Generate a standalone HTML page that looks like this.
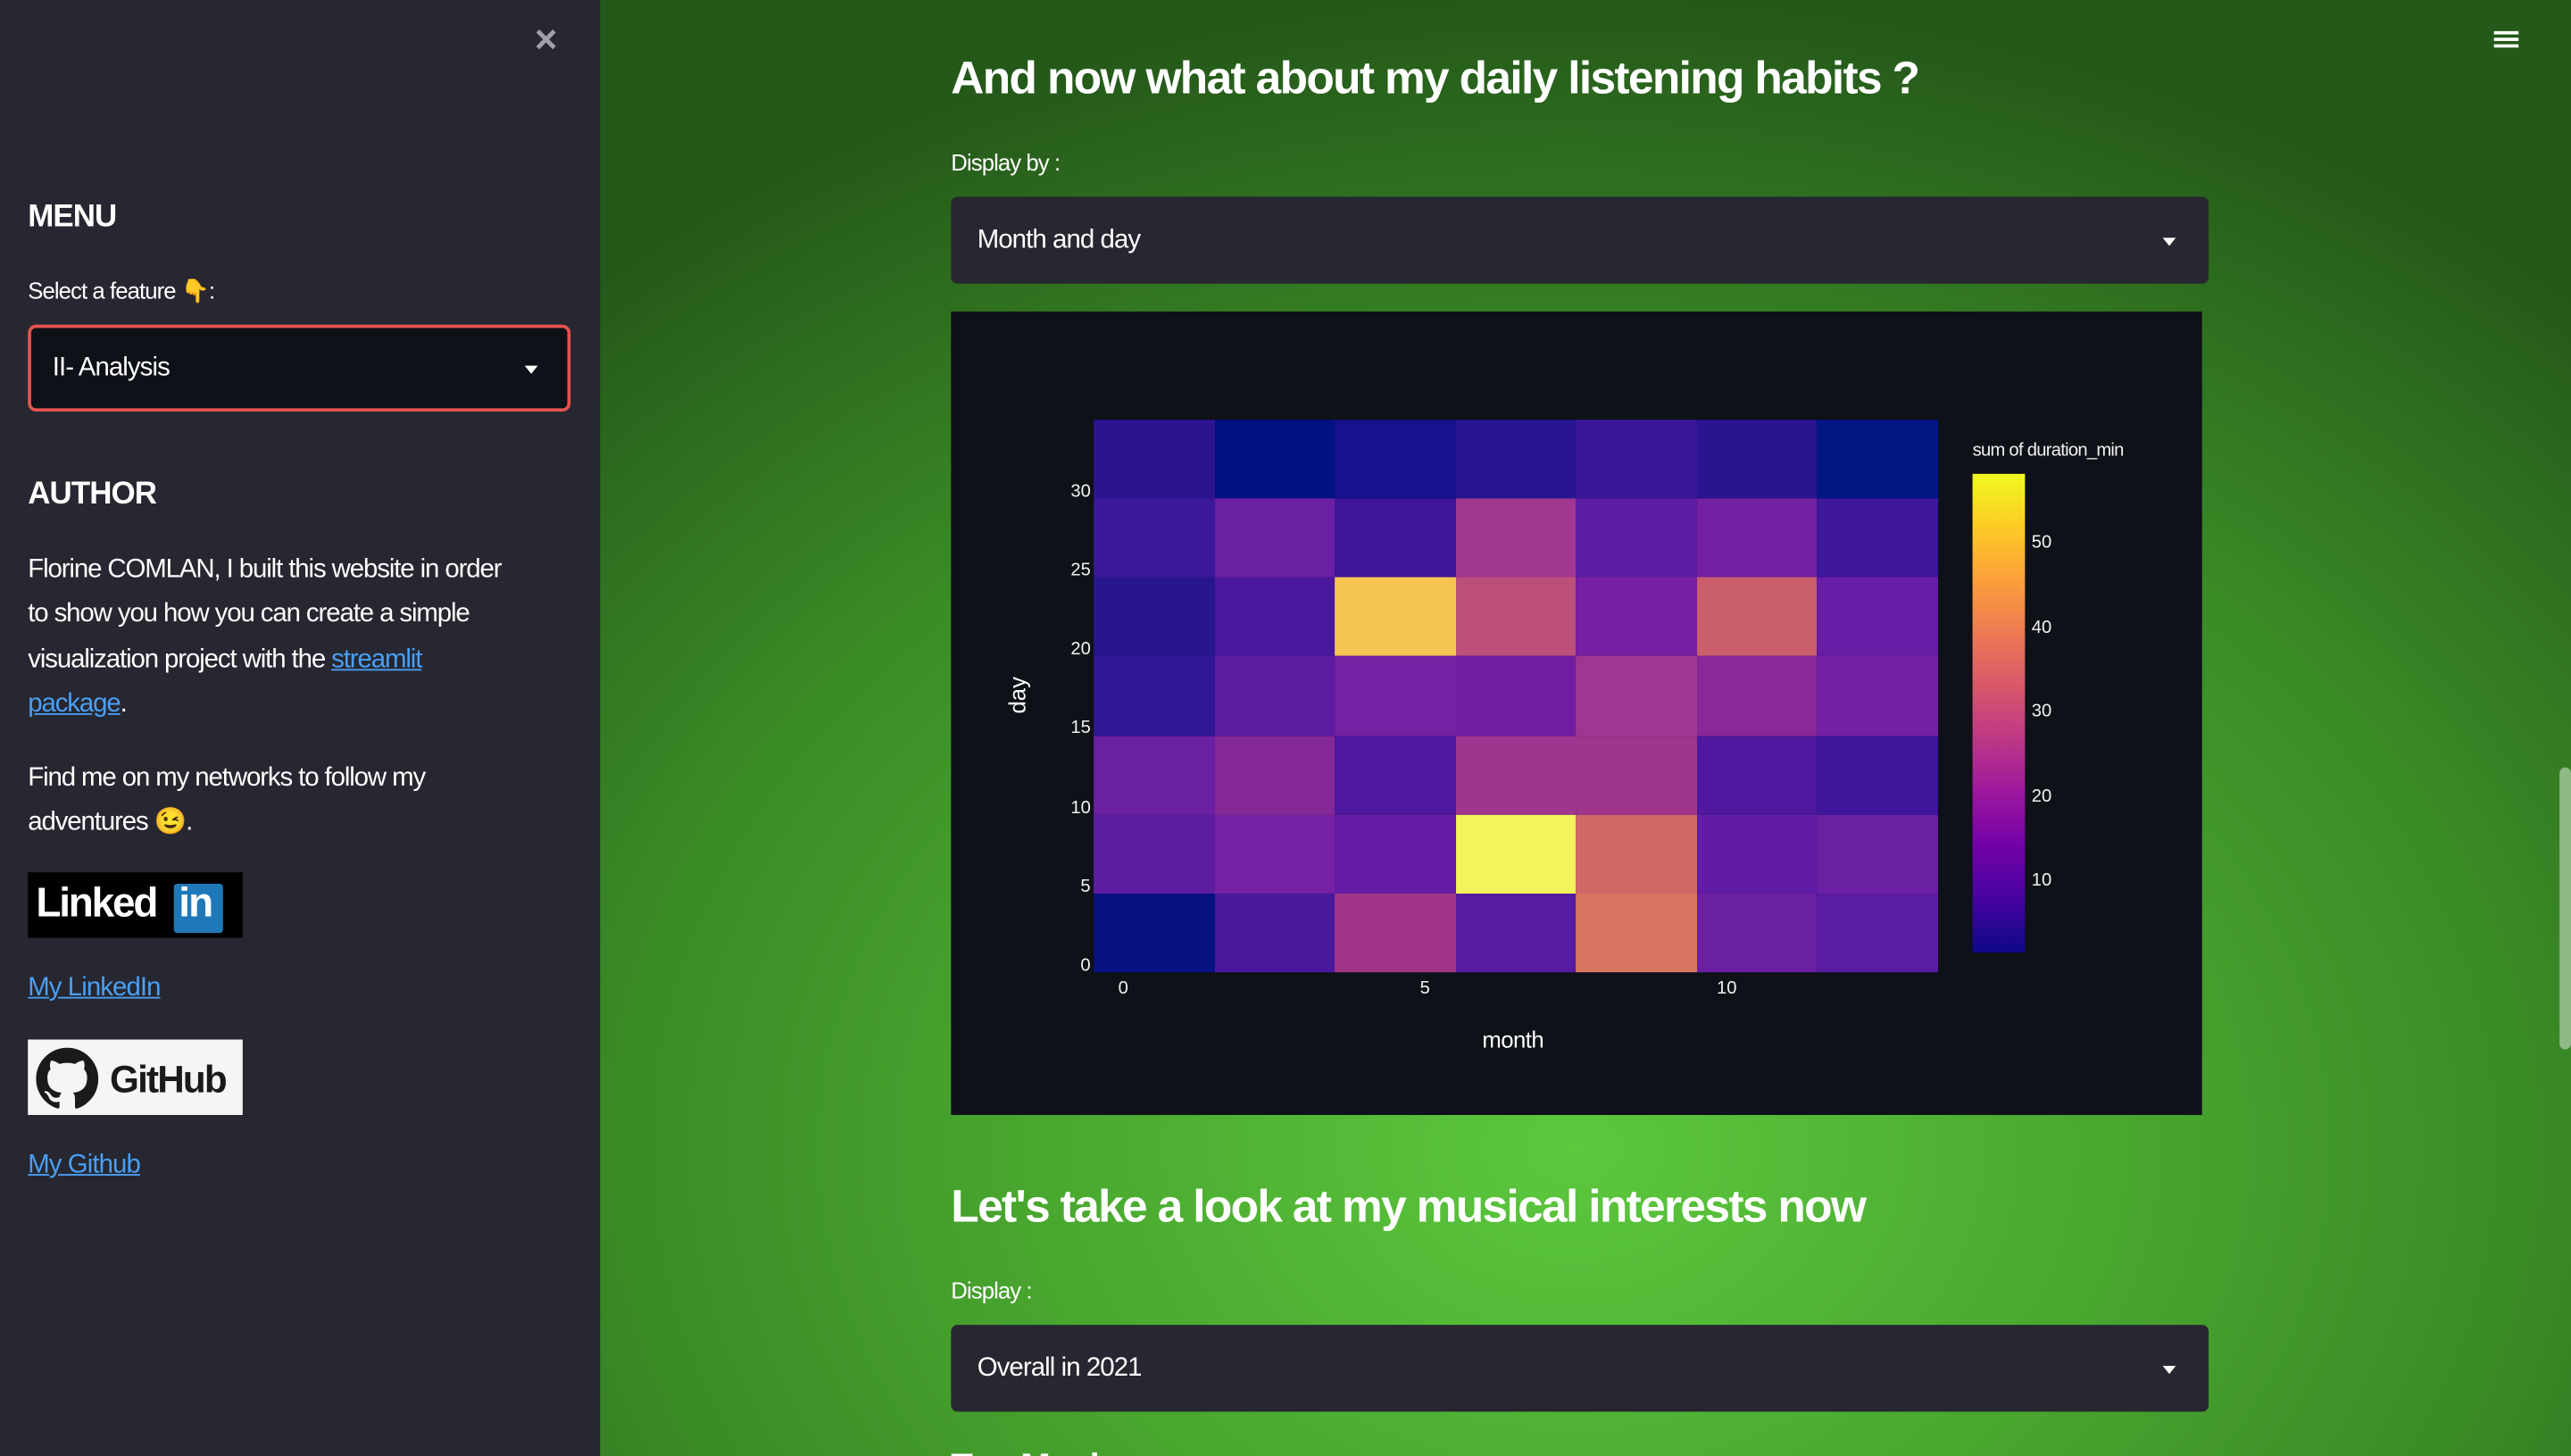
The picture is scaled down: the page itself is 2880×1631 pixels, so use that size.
<!DOCTYPE html>
<html><head><meta charset="utf-8">
<style>
html,body{margin:0;padding:0;width:2880px;height:1630px;overflow:hidden;background:#3a8a26;}
#w{position:absolute;left:0;top:0;width:1568px;height:888px;transform:scale(1.836735);transform-origin:0 0;font-family:"Liberation Sans","Noto Sans CJK JP",sans-serif;color:#fff;overflow:hidden;
background:radial-gradient(ellipse 900px 700px at 960px 700px,#5cc83e 0%,#4aa82f 35%,#3a8a26 65%,#25591a 100%);}
#side{position:absolute;left:0;top:0;width:366px;height:888px;background:#262730;}
.abs{position:absolute;white-space:nowrap}
.sel{position:absolute;border-radius:4px;background:#262730;}
.arr{position:absolute;width:0;height:0;border-left:4.5px solid transparent;border-right:4.5px solid transparent;border-top:5px solid #fff;}
a{color:#4a9ff5;text-decoration:underline}
.cell{position:absolute;width:73.6px;height:48.2px}
.tk{position:absolute;font-size:11px;color:#f2f2f2}
</style></head><body><div id="w">
<div id="side">
 <div class="abs" style="left:326px;top:11px;font-size:24px;color:#a0a0a8;font-weight:bold">×</div>
 <div class="abs" style="left:17px;top:122px;font-size:19px;font-weight:bold;letter-spacing:-0.5px">MENU</div>
 <div class="abs" style="left:17px;top:169px;font-size:14px;letter-spacing:-0.5px">Select a feature <span style="color:#f2b53a">👇</span>:</div>
 <div class="abs" style="left:17px;top:198px;width:327px;height:49px;background:#0e1117;border:2px solid #e5544f;border-radius:5px"></div>
 <div class="abs" style="left:32px;top:216px;font-size:16px;letter-spacing:-0.5px">II- Analysis</div>
 <div class="arr" style="left:320px;top:223px"></div>
 <div class="abs" style="left:17px;top:291px;font-size:19px;font-weight:bold;letter-spacing:-0.5px">AUTHOR</div>
 <div class="abs" style="left:17px;top:334px;font-size:16px;line-height:27.3px;letter-spacing:-0.6px">Florine COMLAN, I built this website in order<br>to show you how you can create a simple<br>visualization project with the <a>streamlit</a><br><a>package</a>.</div>
 <div class="abs" style="left:17px;top:461px;font-size:16px;line-height:27.3px;letter-spacing:-0.6px">Find me on my networks to follow my<br>adventures <span style="color:#f2c43a">😉</span>.</div>
 <div class="abs" style="left:17px;top:532px;width:131px;height:40px;background:#000"></div>
 <div class="abs" style="left:22px;top:537px;font-size:25px;font-weight:bold;letter-spacing:-1.2px">Linked</div>
 <div class="abs" style="left:106px;top:539px;width:30px;height:30px;background:#1f78b8;border-radius:2px"></div>
 <div class="abs" style="left:109px;top:537px;font-size:25px;font-weight:bold;letter-spacing:-1px">in</div>
 <div class="abs" style="left:17px;top:594px;font-size:16px;letter-spacing:-0.5px"><a>My LinkedIn</a></div>
 <div class="abs" style="left:17px;top:634px;width:131px;height:46px;background:#f5f5f5"></div>
 <svg class="abs" style="left:22px;top:639px" width="38" height="38" viewBox="0 0 16 16"><path fill="#1a1a1a" d="M8 0C3.58 0 0 3.58 0 8c0 3.54 2.29 6.530 5.47 7.590.4.07.55-.17.55-.38v-1.34c-2.23.48-2.7-1.07-2.7-1.07-.36-.92-.89-1.17-.89-1.17-.73-.5.06-.49.06-.49.8.06 1.23.83 1.23.83.71 1.22 1.87.87 2.33.66.07-.52.28-.87.51-1.07-1.780-.2-3.65-.89-3.65-3.95 0-.87.31-1.59.82-2.150-.08-.2-.36-1.02.08-2.12 0 0 .67-.21 2.2.82a7.6 7.6 0 0 1 4 0c1.53-1.04 2.2-.82 2.2-.82.44 1.1.16 1.92.08 2.12.51.56.82 1.27.82 2.15 0 3.07-1.87 3.75-3.65 3.95.29.25.54.73.54 1.48v2.2c0 .21.15.46.55.38A8.01 8.01 0 0 0 16 8c0-4.42-3.58-8-8-8z"/></svg>
 <div class="abs" style="left:67px;top:645px;font-size:23px;font-weight:bold;color:#1a1a1a;letter-spacing:-1px">GitHub</div>
 <div class="abs" style="left:17px;top:702px;font-size:16px;letter-spacing:-0.5px"><a>My Github</a></div>
</div>
<div class="abs" style="left:1521px;top:19px;width:15px;height:1.5px;background:#fff;box-shadow:0 4px 0 #fff,0 8px 0 #fff"></div>
<div class="abs" style="left:1561px;top:468px;width:7px;height:172px;background:#8fb985;border-radius:4px"></div>

<div class="abs" style="left:580px;top:32px;font-size:28px;font-weight:bold;letter-spacing:-0.9px">And now what about my daily listening habits ?</div>
<div class="abs" style="left:580px;top:91px;font-size:14px;letter-spacing:-0.5px">Display by :</div>
<div class="sel" style="left:580px;top:120px;width:767px;height:53px"></div>
<div class="abs" style="left:596px;top:138px;font-size:16px;letter-spacing:-0.5px">Month and day</div>
<div class="arr" style="left:1319px;top:145px"></div>

<div class="abs" style="left:580px;top:190px;width:763px;height:490px;background:#0e1117"></div>
<div class="abs" style="left:667px;top:256px;width:515px;height:337px">
<div id="g"></div>
</div>
<div class="abs" style="left:1203px;top:289px;width:32px;height:292px;background:linear-gradient(to bottom,#f0f921,#fdca26,#fb9f3a,#ed7953,#d8576b,#bd3786,#9c179e,#7201a8,#46039f,#0d0887)"></div>
<div class="tk" style="left:1203px;top:269px;letter-spacing:-0.4px">sum of duration_min</div>
<div class="tk" style="left:1239px;top:325px">50</div>
<div class="tk" style="left:1239px;top:377px">40</div>
<div class="tk" style="left:1239px;top:428px">30</div>
<div class="tk" style="left:1239px;top:480px">20</div>
<div class="tk" style="left:1239px;top:531px">10</div>
<div class="tk" style="left:653px;top:294px">30</div>
<div class="tk" style="left:653px;top:342px">25</div>
<div class="tk" style="left:653px;top:390px">20</div>
<div class="tk" style="left:653px;top:438px">15</div>
<div class="tk" style="left:653px;top:487px">10</div>
<div class="tk" style="left:659px;top:535px">5</div>
<div class="tk" style="left:659px;top:583px">0</div>
<div class="tk" style="left:682px;top:597px">0</div>
<div class="tk" style="left:866px;top:597px">5</div>
<div class="tk" style="left:1047px;top:597px">10</div>
<div class="abs" style="left:904px;top:626px;font-size:14px;letter-spacing:-0.3px">month</div>
<div class="abs" style="left:609px;top:416px;font-size:14px;transform:rotate(-90deg)">day</div>

<div class="abs" style="left:580px;top:720px;font-size:28px;font-weight:bold;letter-spacing:-0.9px">Let's take a look at my musical interests now</div>
<div class="abs" style="left:580px;top:779px;font-size:14px;letter-spacing:-0.5px">Display :</div>
<div class="sel" style="left:580px;top:808px;width:767px;height:53px"></div>
<div class="abs" style="left:596px;top:826px;font-size:16px;letter-spacing:-0.5px">Overall in 2021</div>
<div class="arr" style="left:1319px;top:833px"></div>
<div class="abs" style="left:580px;top:882px;font-size:22px;font-weight:bold;letter-spacing:-0.6px">Top Musics</div>
</div>
<script>
var c=[
["#2c1491","#011181","#16118d","#271592","#3a1699","#2a1490","#041683"],
["#3b179a","#6b1fa3","#3e159b","#a13791","#5e1ca6","#7320a3","#3e179b"],
["#27168f","#4a189f","#f5c451","#bb4f7a","#771fa3","#c95f6c","#671da5"],
["#301795","#5d1ba0","#7421a3","#6f1ea2","#a13592","#8a2899","#7320a3"],
["#6b1fa3","#842797","#4e19a0","#a0358f","#a0358c","#4e19a0","#3e169b"],
["#5e1ca1","#7521a3","#651ca5","#f3f35c","#d06966","#601ca5","#6b1fa2"],
["#061182","#4a189d","#a13689","#551ba0","#d7745f","#6b1fa3","#5a1ca2"]];
var h="";for(var r=0;r<7;r++)for(var k=0;k<7;k++)h+='<div class="cell" style="left:'+(k*73.57)+'px;top:'+(r*48.14)+'px;background:'+c[r][k]+'"></div>';
document.getElementById("g").innerHTML=h;
</script>
</body></html>
